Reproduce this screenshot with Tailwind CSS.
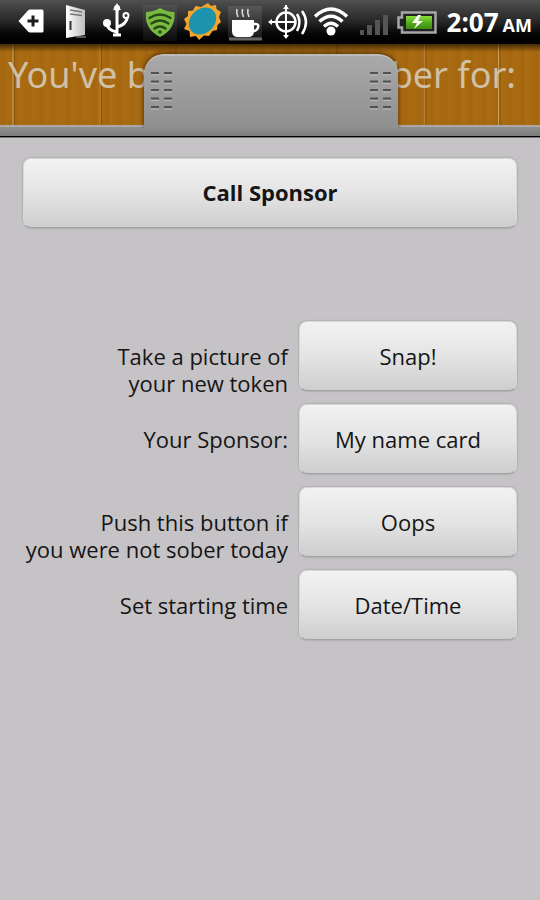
<!DOCTYPE html>
<html lang="en">
<head>
<meta charset="utf-8">
<meta name="viewport" content="width=device-width, initial-scale=1">
<title>Sobriety Tracker</title>
<script src="https://cdn.jsdelivr.net/npm/@tailwindcss/browser@4"></script>
</head>
<body class="flex min-h-screen flex-col bg-[#c5c3c6] font-['Open_Sans','Noto_Sans',sans-serif] text-[#151515]">

<!-- Status bar -->
<div class="flex h-11 items-center justify-between bg-linear-to-b from-[#505050] via-[#262626] to-black pr-2 pl-4">
  <svg class="h-11 w-[422px] shrink-0" viewBox="16 0 422 44" aria-hidden="true">
    <defs>
      <linearGradient id="door" x1="0" x2="1"><stop offset="0" stop-color="#fff"/><stop offset="1" stop-color="#bdbdbd"/></linearGradient>
      <linearGradient id="cell" x1="0" x2="0" y1="0" y2="1"><stop offset="0" stop-color="#8bdc3c"/><stop offset=".5" stop-color="#55ad1c"/><stop offset="1" stop-color="#3b8a10"/></linearGradient>
      <linearGradient id="tile" x1="0" x2="0" y1="0" y2="1"><stop offset="0" stop-color="#585858"/><stop offset="1" stop-color="#151515"/></linearGradient>
    </defs>
    <path d="M18.500 21 28 10.500Q29 9.500 30 9.500H42Q43.500 9.500 43.500 11V31Q43.500 32.500 42 32.500H30Q29 32.500 28 31.500Z" fill="#fff"/>
    <path d="M33 15.500V26.500M27.500 21H38.500" stroke="#1b1b1b" stroke-width="3"/>
    <path d="M66 5 85 10V35L66 38Z" fill="url(#door)"/>
    <path d="M70 10 82 12M70 14 82 15.500" stroke="#777" stroke-width="1.500"/>
    <path d="M70.500 21V30" stroke="#333" stroke-width="2"/>
    <path d="M76 37H86" stroke="#555" stroke-width="2"/>
    <g fill="none" stroke="#fff" stroke-width="3"><path d="M117 7V35M117 32Q107 30 107 23M117 27Q126 25 127.500 17"/></g>
    <path d="M117 3 121 10H113Z" fill="#fff"/><circle cx="117" cy="8" r="3" fill="#fff"/><circle cx="107" cy="23" r="4" fill="#fff"/><circle cx="126" cy="15.500" r="2.500" fill="none" stroke="#fff" stroke-width="2"/><path d="M113 35H121" stroke="#fff" stroke-width="3"/>
    <rect x="143" y="5" width="34" height="36" fill="url(#tile)" opacity=".55"/>
    <path d="M146 12Q153 12 160 8Q167 12 174.500 12Q176 29 160 37Q144 29 146 12Z" fill="#79b943"/>
    <g fill="none" stroke="#244913" stroke-width="2.300" stroke-linecap="round"><path d="M149.500 18Q160 11 170.500 18M151.500 23.500Q160 17.500 168.500 23.500M154.500 28.500Q160 24.500 165.500 28.500"/></g>
    <circle cx="160" cy="32" r="1.800" fill="#244913"/>
    <path d="M208 3 211 6 216 5 216.500 9 221 12 219 17 221 22 217.500 25 217 30 212.500 31 209 36 204 35.500 199 40 196 36 190 37 189.500 31 184 29 186.500 24 184 19 188 16 188 11 193 10.500 195.500 6 201 7Z" fill="#f3a52b"/>
    <ellipse cx="202.500" cy="21" rx="15" ry="12" transform="rotate(-43 202.500 21)" fill="#1e93ad"/>
    <rect x="228" y="6" width="34" height="33" fill="url(#tile)"/>
    <path d="M232 20H254V31Q254 37 248 37H238Q232 37 232 31Z" fill="#fff"/>
    <path d="M254 24H256Q259 24 258 27.500Q257 31 253 31" fill="none" stroke="#fff" stroke-width="2.500"/>
    <path d="M237 9Q236 13 238 17M242.500 9Q241.500 13 243.500 17M248 9Q247 13 249 17" fill="none" stroke="#ddd" stroke-width="1.600"/>
    <path d="M229 39H262" stroke="#666" stroke-width="3"/>
    <g fill="none" stroke="#fff"><circle cx="286" cy="22" r="9.500" stroke-width="2.500"/><path d="M286 5V38M269 22H296" stroke-width="2"/><path d="M297 14Q302 22 297 31M302 11Q310 22 302 34" stroke-width="2.500"/></g>
    <path d="M286 5 289 9H283ZM286 39 289 35H283ZM268 22 272 19V25Z" fill="#fff"/>
    <g fill="none" stroke="#fff" stroke-width="3.500"><path d="M315 16.500Q331 1.500 347 16.500M319.500 21.500Q331 11 342.500 21.500M324 26.500Q331 20 338 26.500"/></g><circle cx="331" cy="31" r="4.500" fill="#fff"/>
    <g fill="#555"><path d="M360 30H364V35H360ZM367 25H372V35H367ZM375 20H380V35H375ZM383 15H388V35H383Z"/></g>
    <path d="M402 12.500H435.500V32.500H402V27.500H398.500V17.500H402Z" fill="#222" stroke="#a6a6a6" stroke-width="2.500"/>
    <rect x="406" y="16" width="26" height="13" fill="url(#cell)"/>
    <path d="M418 15 412 23 417 23 414 29 423 21 418 21 421 15Z" fill="#fff"/>
  </svg>
  <time datetime="02:07" class="flex items-baseline gap-1 font-bold whitespace-nowrap text-white"><span class="text-[26px]">2:07</span><span class="text-lg">AM</span></time>
</div>

<!-- Wooden banner with the drawer handle over it -->
<header class="relative">
  <div class="relative h-[81px] overflow-hidden bg-[#a8690f] bg-[repeating-linear-gradient(90deg,#00000000_0px,#00000008_3px,#ffffff05_7px,#00000000_13px)] pr-6 pl-2">
    <svg class="absolute inset-0 size-full" viewBox="0 0 540 81" preserveAspectRatio="none" aria-hidden="true">
      <path d="M13 0V81M498.500 0V81" stroke="#d3a154" stroke-width="1"/>
      <path d="M100 0V81M424.500 0V81" stroke="#bb8236" stroke-width="1"/>
      <path d="M14.500 0V81M101.500 0V81M426 0V81M500 0V81" stroke="#865411" stroke-width="1"/>
      <path d="M176 0V10M337 0V10" stroke="#805010"/>
      <path d="M28 0V81M56 0V81M82 0V81M111 0V81M444 0V81M464 0V81M526 0V81" stroke="#c47d18" stroke-width="2" opacity=".2"/>
    </svg>
    <h1 class="relative flex justify-between font-['Noto_Sans','Open_Sans',sans-serif] text-4xl leading-[62px] text-[#cfc0a6]"><span>You've been</span><span>sober for:</span></h1>
    <div class="absolute inset-x-0 top-0 h-2 bg-linear-to-b from-black/60 to-transparent"></div>
  </div>
  <div class="h-[11px] border-t-2 border-[#aaa9a6] bg-linear-to-b from-[#909090] to-[#7b7b7b]"></div>
  <div class="h-0.5 border-b border-[#777] bg-black"></div>
  <button type="button" aria-label="Open drawer" class="absolute top-[10px] right-[26.300%] left-[26.600%] flex h-[74px] justify-between rounded-t-[20px] border-t-2 border-[#bcbcbc] bg-linear-to-b from-[#a9a9a9] to-[#8f8f8f] px-[7px] pt-[14px] shadow-[0_-1px_5px_rgba(0,0,0,0.6)] [clip-path:inset(-8px_-8px_0px_-8px)]">
    <svg class="h-10 w-[21px]" viewBox="0 0 21 40" aria-hidden="true"><path d="M0 3H8M13 3H21M0 11.500H8M13 11.500H21M0 20H8M13 20H21M0 28.500H8M13 28.500H21M0 37H8M13 37H21" stroke="#525252" stroke-width="2"/><path d="M0 5H8M13 5H21M0 13.500H8M13 13.500H21M0 22H8M13 22H21M0 30.500H8M13 30.500H21M0 39H8M13 39H21" stroke="#b8b8b8"/></svg>
    <svg class="h-10 w-[21px]" viewBox="0 0 21 40" aria-hidden="true"><path d="M0 3H8M13 3H21M0 11.500H8M13 11.500H21M0 20H8M13 20H21M0 28.500H8M13 28.500H21M0 37H8M13 37H21" stroke="#525252" stroke-width="2"/><path d="M0 5H8M13 5H21M0 13.500H8M13 13.500H21M0 22H8M13 22H21M0 30.500H8M13 30.500H21M0 39H8M13 39H21" stroke="#b8b8b8"/></svg>
  </button>
</header>

<main class="flex flex-col gap-[93px] px-[23px] pt-5 pb-8 text-[22px] leading-[27px]">
  <button type="button" class="h-[70px] w-full rounded-lg border border-[#d8d8d8] border-b-[#a3a2a4] bg-linear-to-b from-[#f2f2f2] via-[#e4e4e4] to-[#cecece] pb-0.5 font-bold shadow-[0_0_2px_rgba(0,0,0,0.3)]">Call Sponsor</button>

  <div class="grid grid-cols-[minmax(0,1fr)_218px] gap-x-[11px] gap-y-[13px] text-right">
    <label for="snap" class="-mb-2 pt-[22px]">Take a picture of<br>your new token</label>
    <button id="snap" type="button" class="h-[70px] rounded-lg border border-[#d8d8d8] border-b-[#a3a2a4] bg-linear-to-b from-[#f2f2f2] via-[#e4e4e4] to-[#cecece] shadow-[0_0_2px_rgba(0,0,0,0.3)]">Snap!</button>

    <label for="card" class="pt-[22px]">Your Sponsor:</label>
    <button id="card" type="button" class="h-[70px] rounded-lg border border-[#d8d8d8] border-b-[#a3a2a4] bg-linear-to-b from-[#f2f2f2] via-[#e4e4e4] to-[#cecece] shadow-[0_0_2px_rgba(0,0,0,0.3)]">My name card</button>

    <label for="oops" class="-mb-2 pt-[22px]">Push this button if<br>you were not sober today</label>
    <button id="oops" type="button" class="h-[70px] rounded-lg border border-[#d8d8d8] border-b-[#a3a2a4] bg-linear-to-b from-[#f2f2f2] via-[#e4e4e4] to-[#cecece] shadow-[0_0_2px_rgba(0,0,0,0.3)]">Oops</button>

    <label for="date" class="pt-[22px]">Set starting time</label>
    <button id="date" type="button" class="h-[70px] rounded-lg border border-[#d8d8d8] border-b-[#a3a2a4] bg-linear-to-b from-[#f2f2f2] via-[#e4e4e4] to-[#cecece] shadow-[0_0_2px_rgba(0,0,0,0.3)]">Date/Time</button>
  </div>
</main>
</body>
</html>
